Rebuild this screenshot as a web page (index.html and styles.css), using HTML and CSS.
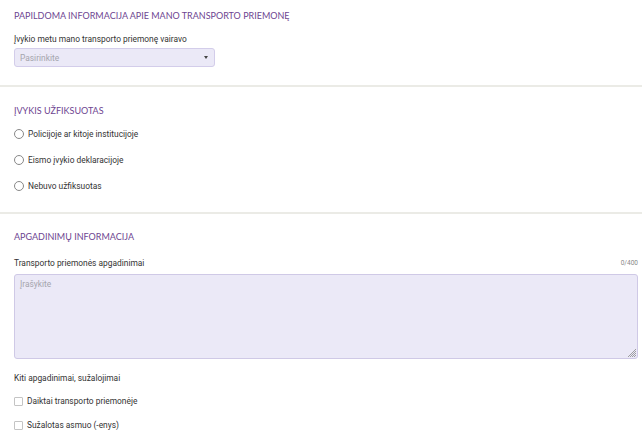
FILE: index.html
```html
<!DOCTYPE html>
<html lang="lt">
<head>
<meta charset="utf-8">
<link rel="stylesheet" href="styles.css">
</head>
<body>
<div class="page">
  <section class="section s1">
    <h2 class="title">PAPILDOMA INFORMACIJA APIE MANO TRANSPORTO PRIEMONĘ</h2>
    <div class="label">Įvykio metu mano transporto priemonę vairavo</div>
    <div class="select">
      <span class="placeholder">Pasirinkite</span>
      <span class="caret"></span>
    </div>
  </section>
  <hr class="divider">
  <section class="section s2">
    <h2 class="title">ĮVYKIS UŽFIKSUOTAS</h2>
    <div class="options">
      <label class="opt"><span class="radio"></span>Policijoje ar kitoje institucijoje</label>
      <label class="opt"><span class="radio"></span>Eismo įvykio deklaracijoje</label>
      <label class="opt"><span class="radio"></span>Nebuvo užfiksuotas</label>
    </div>
  </section>
  <hr class="divider">
  <section class="section s3">
    <h2 class="title">APGADINIMŲ INFORMACIJA</h2>
    <div class="label-row">
      <span class="label">Transporto priemonės apgadinimai</span>
      <span class="counter">0/400</span>
    </div>
    <div class="textarea">
      <span class="placeholder">Įrašykite</span>
      <svg class="grip" width="8" height="8" viewBox="0 0 8 8"><path d="M8 0L0 8M8 2L2 8M8 4L4 8M8 6L6 8" stroke="#8a8a8a" stroke-width="0.8"/></svg>
    </div>
    <div class="label sub">Kiti apgadinimai, sužalojimai</div>
    <div class="options checks">
      <label class="opt"><span class="check"></span>Daiktai transporto priemonėje</label>
      <label class="opt"><span class="check"></span>Sužalotas asmuo (-enys)</label>
    </div>
  </section>
</div>
</body>
</html>
```
FILE: styles.css
```css
* { box-sizing: border-box; }
html, body { margin: 0; padding: 0; background: #fff; }
body { font-family: Roboto, "Liberation Sans", Arial, sans-serif; color: #333; font-size: 8.4px; }
.page { width: 642px; }
.section { padding: 0 4px 0 14px; }
.title {
  margin: 0;
  font-family: Lato, "Open Sans", sans-serif;
  font-weight: 400;
  font-size: 9px;
  color: #6e4591;
  line-height: 12px;
}
.s1 { padding-top: 10px; padding-bottom: 18px; }
.s1 .title { margin-bottom: 11px; }
.label { line-height: 12px; color: #333; }
.select {
  margin-top: 3px;
  width: 201px;
  height: 19px;
  border: 1px solid #d3cdea;
  border-radius: 3px;
  background: #ebe9f7;
  display: flex;
  align-items: center;
  justify-content: space-between;
  padding: 0 6px 0 5px;
}
.placeholder { color: #a5a5ad; }
.caret {
  width: 0; height: 0;
  border-left: 2.5px solid transparent;
  border-right: 2.5px solid transparent;
  border-top: 3px solid #444;
}
.divider { margin: 0; border: 0; height: 2px; background: #ebebe6; }
.s2 { padding-top: 18px; padding-bottom: 20px; }
.s2 .title { margin-bottom: 11px; }
.options { display: flex; flex-direction: column; gap: 14px; }
.opt { display: flex; align-items: center; line-height: 12px; color: #333; }
.radio {
  width: 10px; height: 10px;
  border: 1px solid #888;
  border-radius: 50%;
  margin-right: 4px;
  background: #fff;
}
.s3 { padding-top: 17px; padding-bottom: 10px; }
.s3 .title { margin-bottom: 14px; }
.label-row { display: flex; justify-content: space-between; align-items: center; }
.counter { font-size: 6.5px; color: #888; margin-right: 0; }
.textarea {
  position: relative;
  margin-top: 5px;
  height: 85px;
  border: 1px solid #cfc9e6;
  border-radius: 3px;
  background: #ebe9f7;
  padding: 4px 5px;
}
.textarea .grip { position: absolute; right: 1px; bottom: 1px; }
.sub { margin-top: 13px; margin-bottom: 11px; }
.checks { gap: 12px; }
.check {
  width: 9px; height: 9px;
  border: 1px solid #c4c4c4;
  border-radius: 1px;
  margin-right: 4px;
  background: #fff;
}
```
